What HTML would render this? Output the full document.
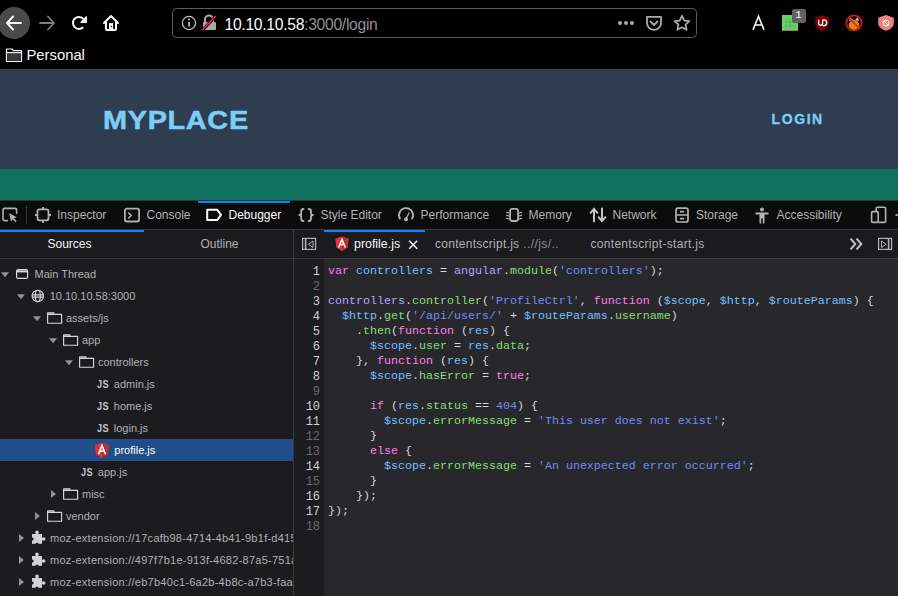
<!DOCTYPE html>
<html><head><meta charset="utf-8">
<style>
*{box-sizing:border-box;margin:0;padding:0}
html,body{width:898px;height:596px;overflow:hidden;background:#000;font-family:"Liberation Sans",sans-serif}
.a{position:absolute}
svg{position:absolute;overflow:visible}
#chrome{left:0;top:0;width:898px;height:69px;background:#000}
#hdr{left:0;top:69px;width:898px;height:100px;background:#2e3e50}
#green{left:0;top:169px;width:898px;height:31px;background:#10705e}
#tb{left:0;top:200px;width:898px;height:29px;background:#0c0c0d;border-top:1px solid #333}
#tabs{left:0;top:229px;width:898px;height:30px;background:#1b1b1e;border-top:1px solid #38383d;border-bottom:1px solid #38383d}
#side{left:0;top:259px;width:293px;height:337px;background:#1c1c1f}
#vdiv{left:293px;top:229px;width:1px;height:367px;background:#38383d}
#gut{left:294px;top:259px;width:30px;height:337px;background:#1c1c1f}
#code{left:324px;top:259px;width:574px;height:337px;background:#28282c}
.tt{font-size:12px;color:#b1b1b3;white-space:nowrap}
.tr{font-size:11px;color:#b1b1b3;white-space:nowrap}
.cl{position:absolute;left:328px;font-family:"Liberation Mono",monospace;font-size:11.67px;white-space:pre;color:#d7d7db;line-height:15px;height:15px}
.ln{position:absolute;left:294px;width:25.6px;text-align:right;font-family:"Liberation Mono",monospace;font-size:12px;line-height:15px;color:#6a6a6e;letter-spacing:-0.3px;margin-top:1px}
.ln.b{color:#cfcfd3}
.k{color:#ff7de9}
.d{color:#75bfff}
.v{color:#b0a4ff}
.p{color:#86de74}
.s{color:#6f8cf5}
</style></head><body>
<div id="chrome" class="a"></div>
<div id="hdr" class="a"></div>
<div id="green" class="a"></div>
<div id="tb" class="a"></div>
<div id="tabs" class="a"></div>
<div id="side" class="a"></div>
<div id="gut" class="a"></div>
<div id="code" class="a"></div>
<div id="vdiv" class="a"></div>


<!-- browser chrome -->
<svg width="898" height="69" style="left:0;top:0">
  <circle cx="14" cy="23" r="16" fill="#4a4a4b"/>
  <g stroke="#fbfbfe" stroke-width="2" fill="none" stroke-linecap="round" stroke-linejoin="round">
    <path d="M7 23 H21 M13 16.5 L7 23 L13 29.5"/>
  </g>
  <g stroke="#7e7e80" stroke-width="1.8" fill="none" stroke-linecap="round" stroke-linejoin="round">
    <path d="M40 23 H54 M48 16.5 L54 23 L48 29.5"/>
  </g>
  <path d="M83.2 27.2 A6 6 0 1 1 83.4 18.9" stroke="#fbfbfe" stroke-width="2" fill="none"/>
  <path d="M81 22.3 H86.3 V16.8 Z" fill="#fbfbfe" stroke="#fbfbfe" stroke-width="1.3" stroke-linejoin="round"/>
  <path d="M104 23 L111 16 L118 23" stroke="#fbfbfe" stroke-width="2" fill="none" stroke-linecap="round" stroke-linejoin="round"/>
  <path d="M106 21.5 V29 Q106 30 107 30 H115 Q116 30 116 29 V21.5" stroke="#fbfbfe" stroke-width="2" fill="none"/>
  <rect x="109" y="23.1" width="4.1" height="7" fill="#fbfbfe"/>
  <circle cx="111.4" cy="26.4" r="0.7" fill="#000"/>
  <rect x="172.5" y="8.5" width="524" height="29" rx="4" fill="#000" stroke="#5d5d5f"/>
  <circle cx="189" cy="23" r="6.6" fill="none" stroke="#c6c6c8" stroke-width="1.2"/>
  <rect x="188.2" y="22" width="1.7" height="4.5" fill="#c6c6c8"/>
  <circle cx="189" cy="19.6" r="1" fill="#c6c6c8"/>
  <path d="M205 22 V19.5 A4 4 0 0 1 213 19.5 V22" fill="none" stroke="#a9a9ab" stroke-width="2"/>
  <rect x="203" y="22" width="13" height="8" rx="1" fill="#a9a9ab"/>
  <path d="M202.5 30 L216 16" stroke="#000" stroke-width="3"/>
  <path d="M202.5 29.5 L215.5 16.5" stroke="#ff1f4b" stroke-width="1.6" stroke-linecap="round"/>
  <circle cx="620" cy="23" r="2" fill="#a9a9ab"/>
  <circle cx="626" cy="23" r="2" fill="#a9a9ab"/>
  <circle cx="632" cy="23" r="2" fill="#a9a9ab"/>
  <path d="M647 16.8 H661 V23 A7 6.8 0 0 1 647 23 Z" fill="none" stroke="#a9a9ab" stroke-width="1.8" stroke-linejoin="round"/>
  <path d="M650.5 21.5 L654 25 L657.5 21.5" fill="none" stroke="#a9a9ab" stroke-width="1.8" stroke-linecap="round" stroke-linejoin="round"/>
  <path d="M682 15.8 L684.3 20.6 L689.4 21.2 L685.6 24.6 L686.6 29.8 L682 27.3 L677.4 29.8 L678.4 24.6 L674.6 21.2 L679.7 20.6 Z" fill="none" stroke="#a9a9ab" stroke-width="1.8" stroke-linejoin="round"/>
  <!-- extensions -->
  <path d="M753 29.8 L758.5 16.4 L764 29.8 M755 25 H762" fill="none" stroke="#fbfbfe" stroke-width="1.6"/>
  <rect x="782" y="15" width="16" height="16" fill="#68d068"/>
  <rect x="782" y="30" width="16" height="1" fill="#c46a5a"/>
  <path d="M786 18 V29 M790 18 V29 M786 22 H796 M786 26 H796" stroke="#51b24e" stroke-width="0.8"/>
  <rect x="792" y="9" width="14" height="14" rx="2" fill="#616163"/>
  <path d="M822 15.2 L828.8 17.5 V23 C828.8 27 826 29.5 822 31 C818 29.5 815.2 27 815.2 23 V17.5 Z" fill="#800000"/>
  <path d="M818.7 19.8 V23.3 A1.95 2 0 0 0 822.6 23.3 V19.8 M822.6 19.8 H823.8 A2.9 2.9 0 0 1 823.8 25.6 H822.6" fill="none" stroke="#fff" stroke-width="1.3"/>
  <circle cx="854" cy="23" r="7.6" fill="#000" stroke="#e0201b" stroke-width="1.5"/>
  <path d="M849 21 L850.5 17.5 L853 20 Z M859 21 L857.5 17.5 L855 20 Z" fill="#e8e8e8"/>
  <path d="M848.5 26 Q849 20.5 854 20 Q859 20.5 859.5 26 Q857 29.8 854 29.8 Q851 29.8 848.5 26 Z" fill="#e8870f"/>
  <path d="M848.6 17.6 L859.4 28.4" stroke="#e0201b" stroke-width="1.6"/>
  <path d="M886 15 L893.8 17.8 V23 C893.8 27 890.6 29.4 886 30.8 C881.4 29.4 878.2 27 878.2 23 V17.8 Z" fill="#f07f84"/>
  <circle cx="886" cy="23" r="3" fill="none" stroke="#fff" stroke-width="1"/>
  <path d="M883.9 20.9 L888.1 25.1" stroke="#fff" stroke-width="1"/>
  <!-- bookmark folder -->
  <path d="M6.5 49 H12 L13.5 50.6 H21.5 V61.5 H6.5 Z" fill="none" stroke="#f4f4f6" stroke-width="1.2" stroke-linejoin="round"/>
  <rect x="7.2" y="53.2" width="13.6" height="7.6" fill="#3a3a3c"/>
  <path d="M6.5 52.6 H21.5" stroke="#f4f4f6" stroke-width="1.2"/>
</svg>
<div class="a" style="left:224.5px;top:14.5px;font-size:15.7px;letter-spacing:-0.3px;line-height:20px;color:#fbfbfe;white-space:nowrap">10.10.10.58<span style="color:#909092">:3000/login</span></div>

<div class="a" style="left:795.5px;top:9.5px;font-family:'Liberation Mono',monospace;font-size:10px;line-height:12px;color:#fff">1</div>
<div class="a" style="left:26.5px;top:46px;font-size:14.8px;line-height:18px;color:#fbfbfe">Personal</div>


<!-- devtools toolbar -->
<div class="a" style="left:198px;top:201px;width:92px;height:2px;background:#0a84ff"></div>
<svg width="898" height="29" style="left:0;top:200px">
  <g fill="none" stroke="#b1b1b3" stroke-width="1.6">
    <!-- picker -->
    <path d="M7.8 20.6 H4.6 Q3 20.6 3 19 V10 Q3 8.4 4.6 8.4 H15 Q16.6 8.4 16.6 10 V13.8"/>
  </g>
  <path d="M9.3 13.3 L16.8 17.2 L13.9 18.2 L16.6 21 L15.4 22.2 L12.6 19.3 L11 21.8 Z" fill="#b1b1b3"/>
  <rect x="26" y="5.5" width="1" height="19" fill="#38383d"/>
  <!-- inspector -->
  <g fill="none" stroke="#b1b1b3" stroke-width="1.8">
    <rect x="37.5" y="9.3" width="11" height="11" rx="2"/>
    <path d="M43 7 V9.5 M43 20.5 V23 M35 15 H37.5 M48.5 15 H51"/>
  </g>
  <!-- console -->
  <g fill="none" stroke="#b1b1b3" stroke-width="1.8">
    <rect x="124.9" y="8.7" width="14.2" height="12.8" rx="2"/>
    <path d="M128.3 12.6 L131.2 15.5 L128.3 18.5" stroke-width="1.5"/>
  </g>
  <!-- debugger -->
  <path d="M207.2 9.8 H217.3 L221 14.9 L217.3 20 H207.2 Z" fill="none" stroke="#fbfbfe" stroke-width="2" stroke-linejoin="round"/>
  <!-- style editor -->
  <g fill="none" stroke="#b1b1b3" stroke-width="1.8" stroke-linecap="round" stroke-linejoin="round">
    <path d="M303.6 9 Q301.2 9 301.2 11.3 V13.3 Q301.2 15 299.3 15 Q301.2 15 301.2 16.7 V18.7 Q301.2 21 303.6 21"/>
    <path d="M308.6 9 Q311 9 311 11.3 V13.3 Q311 15 312.9 15 Q311 15 311 16.7 V18.7 Q311 21 308.6 21"/>
  </g>
  <!-- performance -->
  <path d="M399.9 18.6 A7 7 0 1 1 412.1 18.6" fill="none" stroke="#b1b1b3" stroke-width="1.8" stroke-linecap="round"/>
  <path d="M406 19 L409 13" stroke="#b1b1b3" stroke-width="1.3" stroke-linecap="round"/>
  <circle cx="406" cy="19.3" r="2" fill="#b1b1b3"/>
  <!-- memory -->
  <g fill="none" stroke="#b1b1b3" stroke-width="1.8">
    <rect x="510.1" y="8.9" width="8" height="12.1" rx="2.2"/>
  </g>
  <g fill="none" stroke="#b1b1b3" stroke-width="1.3" stroke-linecap="round">
    <path d="M506.6 12.4 Q507.6 12.6 509 13 M506.6 15.4 Q507.6 15.6 509 16 M506.6 18.4 Q507.6 18.6 509 19"/>
    <path d="M521.6 12.4 Q520.6 12.6 519.2 13 M521.6 15.4 Q520.6 15.6 519.2 16 M521.6 18.4 Q520.6 18.6 519.2 19"/>
  </g>
  <!-- network -->
  <g fill="none" stroke="#c4c4c6" stroke-width="2" stroke-linecap="round" stroke-linejoin="round">
    <path d="M594 21.5 V8.8 M590.6 12.8 L594 8.8 L597.4 12.8"/>
    <path d="M602 8.5 V21.2 M598.6 17.2 L602 21.2 L605.4 17.2"/>
  </g>
  <!-- storage -->
  <g fill="none" stroke="#b1b1b3" stroke-width="1.7">
    <rect x="676" y="8.2" width="12" height="13.8" rx="2"/>
    <path d="M676 15 H688 M680 11.6 H684 M680 18.6 H684"/>
  </g>
  <!-- accessibility -->
  <circle cx="762" cy="9.5" r="2" fill="#b1b1b3"/>
  <path d="M755.5 12.5 H768.5 V14.5 H764.5 V23.5 H762.8 V18.5 H761.2 V23.5 H759.5 V14.5 H755.5 Z" fill="#b1b1b3"/>
  <!-- responsive -->
  <g fill="none" stroke="#b1b1b3" stroke-width="1.6">
    <path d="M876.2 11.5 V8.6 Q876.2 7.2 877.6 7.2 H884.2 Q885.6 7.2 885.6 8.6 V21 Q885.6 22.4 884.2 22.4 H878.4"/>
    <rect x="871.6" y="11.6" width="6.6" height="10.8" rx="1.2"/>
  </g>
  <rect x="895.5" y="14.2" width="3" height="1.6" fill="#b1b1b3"/>
</svg>
<div class="a tt" style="left:57px;top:208px;line-height:14px">Inspector</div>
<div class="a tt" style="left:146.5px;top:208px;line-height:14px">Console</div>
<div class="a tt" style="left:228.5px;top:208px;line-height:14px;color:#fbfbfe">Debugger</div>
<div class="a tt" style="left:320.5px;top:208px;line-height:14px">Style Editor</div>
<div class="a tt" style="left:420.5px;top:208px;line-height:14px">Performance</div>
<div class="a tt" style="left:528.5px;top:208px;line-height:14px">Memory</div>
<div class="a tt" style="left:612.5px;top:208px;line-height:14px">Network</div>
<div class="a tt" style="left:696px;top:208px;line-height:14px">Storage</div>
<div class="a tt" style="left:776.5px;top:208px;line-height:14px">Accessibility</div>


<!-- source tabs -->
<div class="a" style="left:0;top:230px;width:144px;height:2px;background:#0a84ff"></div>
<div class="a" style="left:324px;top:230px;width:101px;height:2px;background:#0a84ff"></div>
<div class="a tt" style="left:47.5px;top:236.5px;line-height:14px;color:#f4f4f5;font-size:12px">Sources</div>
<div class="a tt" style="left:200.5px;top:236.5px;line-height:14px;font-size:12px">Outline</div>
<div class="a tt" style="left:354px;top:237px;line-height:14px;color:#f4f4f5;font-size:12.4px">profile.js</div>
<div class="a tt" style="left:435px;top:237px;line-height:14px;font-size:12px;letter-spacing:0.27px">contentscript.js<span style="color:#8f8f93;margin-left:4px;letter-spacing:0.4px">..//js/..</span></div>
<div class="a tt" style="left:590.5px;top:237px;line-height:14px;font-size:12px;letter-spacing:0.3px">contentscript-start.js</div>
<svg width="898" height="30" style="left:0;top:229px">
  <!-- sidebar toggle -->
  <rect x="302.6" y="9.4" width="13" height="11" fill="none" stroke="#b1b1b3" stroke-width="1.2"/>
  <path d="M305.6 9.4 V20.4" stroke="#b1b1b3" stroke-width="1.6"/>
  <path d="M313 12 L308.5 15.2 L313 18.5 Z" fill="none" stroke="#b1b1b3" stroke-width="1"/>
  <!-- angular icon -->
  <path d="M342 7.5 L348.6 9.8 L347.6 18.8 L342 22 L336.4 18.8 L335.4 9.8 Z" fill="#e23237"/>
  <path d="M342 7.5 L348.6 9.8 L347.6 18.8 L342 22 Z" fill="#b52e31"/>
  <path d="M338.6 18.5 L342 10.5 L345.4 18.5 M339.9 15.6 H344.1" fill="none" stroke="#fff" stroke-width="1.5"/>
  <!-- close x -->
  <path d="M409.2 11.8 L417.2 19.8 M417.2 11.8 L409.2 19.8" stroke="#f4f4f5" stroke-width="1.5"/>
  <!-- >> -->
  <path d="M850.6 9.6 L855.3 15 L850.6 20.4 M856.6 9.6 L861.3 15 L856.6 20.4" fill="none" stroke="#c4c4c6" stroke-width="2"/>
  <!-- toggle right -->
  <rect x="878.6" y="9.4" width="13" height="11" fill="none" stroke="#b1b1b3" stroke-width="1.2"/>
  <path d="M888.6 9.4 V20.4" stroke="#b1b1b3" stroke-width="1.6"/>
  <path d="M881.5 12 L886 15.2 L881.5 18.5 Z" fill="none" stroke="#b1b1b3" stroke-width="1"/>
</svg>


<!-- tree -->
<div class="a" style="left:0;top:259px;width:293px;height:337px;overflow:hidden">
<div class="a" style="left:0;top:-259px;width:898px;height:596px">
<div class="a tr" style="left:34.5px;top:266.5px;line-height:14px;color:#b1b1b3">Main Thread</div>
<div class="a tr" style="left:49.7px;top:288.5px;line-height:14px;color:#b1b1b3">10.10.10.58:3000</div>
<div class="a tr" style="left:66px;top:310.5px;line-height:14px;color:#b1b1b3">assets/js</div>
<div class="a tr" style="left:82px;top:332.5px;line-height:14px;color:#b1b1b3">app</div>
<div class="a tr" style="left:98px;top:354.5px;line-height:14px;color:#b1b1b3">controllers</div>
<div class="a" style="left:97.3px;top:376.5px;font-size:11.4px;font-weight:bold;line-height:14px;color:#c4c4c7;letter-spacing:0.4px;transform:scaleX(0.8);transform-origin:0 0">JS</div>
<div class="a tr" style="left:113.8px;top:376.5px;line-height:14px;color:#b1b1b3">admin.js</div>
<div class="a" style="left:97.3px;top:398.5px;font-size:11.4px;font-weight:bold;line-height:14px;color:#c4c4c7;letter-spacing:0.4px;transform:scaleX(0.8);transform-origin:0 0">JS</div>
<div class="a tr" style="left:113.8px;top:398.5px;line-height:14px;color:#b1b1b3">home.js</div>
<div class="a" style="left:97.3px;top:420.5px;font-size:11.4px;font-weight:bold;line-height:14px;color:#c4c4c7;letter-spacing:0.4px;transform:scaleX(0.8);transform-origin:0 0">JS</div>
<div class="a tr" style="left:113.8px;top:420.5px;line-height:14px;color:#b1b1b3">login.js</div>
<div class="a" style="left:0;top:439px;width:293px;height:22px;background:#204e8a"></div>
<div class="a tr" style="left:114.3px;top:442.5px;line-height:14px;color:#ffffff">profile.js</div>
<div class="a" style="left:81.3px;top:464.5px;font-size:11.4px;font-weight:bold;line-height:14px;color:#c4c4c7;letter-spacing:0.4px;transform:scaleX(0.8);transform-origin:0 0">JS</div>
<div class="a tr" style="left:97.8px;top:464.5px;line-height:14px;color:#b1b1b3">app.js</div>
<div class="a tr" style="left:82px;top:486.5px;line-height:14px;color:#b1b1b3">misc</div>
<div class="a tr" style="left:66px;top:508.5px;line-height:14px;color:#b1b1b3">vendor</div>
<div class="a tr" style="left:50px;top:530.5px;line-height:14px;color:#b1b1b3;letter-spacing:0.26px">moz-extension://17cafb98-4714-4b41-9b1f-d415a1b2c3d4</div>
<div class="a tr" style="left:50px;top:552.5px;line-height:14px;color:#b1b1b3;letter-spacing:0.26px">moz-extension://497f7b1e-913f-4682-87a5-751a2b3c4d5e</div>
<div class="a tr" style="left:50px;top:574.5px;line-height:14px;color:#b1b1b3;letter-spacing:0.26px">moz-extension://eb7b40c1-6a2b-4b8c-a7b3-faa1b2c3d4e5</div>
<svg width="898" height="596" style="left:0;top:0">
<path d="M1.0 272.2 H9.0 L5.0 277.2 Z" fill="#939395"/>
<rect x="16.6" y="269.6" width="11" height="8.8" rx="1.5" fill="none" stroke="#d7d7db" stroke-width="1.2"/><rect x="17" y="270.4" width="10.2" height="2" fill="#d7d7db"/>
<path d="M17.0 294.2 H25.0 L21.0 299.2 Z" fill="#939395"/>
<g fill="none" stroke="#d7d7db" stroke-width="1.1"><circle cx="37.8" cy="296" r="5.7"/><ellipse cx="37.8" cy="296" rx="2.5" ry="5.7"/><path d="M32.1 294.9 H43.5 M32.1 297.1 H43.5"/></g>
<path d="M33.0 316.2 H41.0 L37.0 321.2 Z" fill="#939395"/>
<path d="M47.6 323.2 V312.8 H53.800000000000004 V314.4 H61.6 V323.2 Z M47.6 314.4 H53.800000000000004" fill="none" stroke="#d7d7db" stroke-width="1.15" stroke-linejoin="round"/>
<path d="M49.0 338.2 H57.0 L53.0 343.2 Z" fill="#939395"/>
<path d="M63.599999999999994 345.2 V334.8 H69.8 V336.4 H77.6 V345.2 Z M63.599999999999994 336.4 H69.8" fill="none" stroke="#d7d7db" stroke-width="1.15" stroke-linejoin="round"/>
<path d="M65.0 360.2 H73.0 L69.0 365.2 Z" fill="#939395"/>
<path d="M79.6 367.2 V356.8 H85.8 V358.4 H93.6 V367.2 Z M79.6 358.4 H85.8" fill="none" stroke="#d7d7db" stroke-width="1.15" stroke-linejoin="round"/>
<path d="M102 442.5 L109 445 L108 454.5 L102 458 L96 454.5 L95 445 Z" fill="#e23237"/><path d="M102 442.5 L109 445 L108 454.5 L102 458 Z" fill="#b52e31"/><path d="M98.5 454.2 L102 445.5 L105.5 454.2 M99.9 451 H104.1" fill="none" stroke="#fff" stroke-width="1.6"/>
<path d="M51 490 V498 L56 494 Z" fill="#939395"/>
<path d="M63.599999999999994 499.2 V488.8 H69.8 V490.4 H77.6 V499.2 Z M63.599999999999994 490.4 H69.8" fill="none" stroke="#d7d7db" stroke-width="1.15" stroke-linejoin="round"/>
<path d="M35 512 V520 L40 516 Z" fill="#939395"/>
<path d="M47.6 521.2 V510.8 H53.800000000000004 V512.4 H61.6 V521.2 Z M47.6 512.4 H53.800000000000004" fill="none" stroke="#d7d7db" stroke-width="1.15" stroke-linejoin="round"/>
<path d="M19 534 V542 L24 538 Z" fill="#939395"/>
<rect x="32" y="534" width="10" height="9.8" fill="#d2d2d4"/><circle cx="37" cy="532.4" r="1.8" fill="#d2d2d4"/><circle cx="43.7" cy="539" r="1.8" fill="#d2d2d4"/><rect x="41" y="538" width="2" height="2" fill="#d2d2d4"/><circle cx="32.2" cy="539" r="1.5" fill="#1c1c1f"/><circle cx="37" cy="544" r="1.5" fill="#1c1c1f"/>
<path d="M19 556 V564 L24 560 Z" fill="#939395"/>
<rect x="32" y="556" width="10" height="9.8" fill="#d2d2d4"/><circle cx="37" cy="554.4" r="1.8" fill="#d2d2d4"/><circle cx="43.7" cy="561" r="1.8" fill="#d2d2d4"/><rect x="41" y="560" width="2" height="2" fill="#d2d2d4"/><circle cx="32.2" cy="561" r="1.5" fill="#1c1c1f"/><circle cx="37" cy="566" r="1.5" fill="#1c1c1f"/>
<path d="M19 578 V586 L24 582 Z" fill="#939395"/>
<rect x="32" y="578" width="10" height="9.8" fill="#d2d2d4"/><circle cx="37" cy="576.4" r="1.8" fill="#d2d2d4"/><circle cx="43.7" cy="583" r="1.8" fill="#d2d2d4"/><rect x="41" y="582" width="2" height="2" fill="#d2d2d4"/><circle cx="32.2" cy="583" r="1.5" fill="#1c1c1f"/><circle cx="37" cy="588" r="1.5" fill="#1c1c1f"/>
</svg>
</div></div>

<!-- page header text -->
<div class="a" style="left:103px;top:105px;font-size:26.5px;font-weight:bold;color:#7ccdf7;letter-spacing:0.6px;line-height:30px;-webkit-text-stroke:0.5px #7ccdf7;transform:scaleX(1.09);transform-origin:0 0">MYPLACE</div>
<div class="a" style="left:771.5px;top:110px;font-size:14px;font-weight:bold;color:#7ccdf7;letter-spacing:1.6px;line-height:18px;-webkit-text-stroke:0.3px #7ccdf7">LOGIN</div>

<!-- code -->
<div class="ln b" style="top:264px">1</div>
<div class="ln" style="top:279px">2</div>
<div class="ln b" style="top:294px">3</div>
<div class="ln b" style="top:309px">4</div>
<div class="ln b" style="top:324px">5</div>
<div class="ln b" style="top:339px">6</div>
<div class="ln b" style="top:354px">7</div>
<div class="ln b" style="top:369px">8</div>
<div class="ln" style="top:384px">9</div>
<div class="ln b" style="top:399px">10</div>
<div class="ln b" style="top:414px">11</div>
<div class="ln" style="top:429px">12</div>
<div class="ln" style="top:444px">13</div>
<div class="ln b" style="top:459px">14</div>
<div class="ln" style="top:474px">15</div>
<div class="ln b" style="top:489px">16</div>
<div class="ln b" style="top:504px">17</div>
<div class="ln" style="top:519px">18</div>

<div class="cl" style="top:264px"><span class="k">var</span> <span class="d">controllers</span> = <span class="v">angular</span>.<span class="p">module</span>(<span class="s">'controllers'</span>);</div>
<div class="cl" style="top:294px"><span class="v">controllers</span>.<span class="p">controller</span>(<span class="s">'ProfileCtrl'</span>, <span class="k">function</span> (<span class="d">$scope</span>, <span class="d">$http</span>, <span class="d">$routeParams</span>) {</div>
<div class="cl" style="top:309px">  <span class="d">$http</span>.<span class="p">get</span>(<span class="s">'/api/users/'</span> + <span class="d">$routeParams</span>.<span class="p">username</span>)</div>
<div class="cl" style="top:324px">    .<span class="p">then</span>(<span class="k">function</span> (<span class="d">res</span>) {</div>
<div class="cl" style="top:339px">      <span class="d">$scope</span>.<span class="p">user</span> = <span class="d">res</span>.<span class="p">data</span>;</div>
<div class="cl" style="top:354px">    }, <span class="k">function</span> (<span class="d">res</span>) {</div>
<div class="cl" style="top:369px">      <span class="d">$scope</span>.<span class="p">hasError</span> = <span class="k">true</span>;</div>
<div class="cl" style="top:399px">      <span class="k">if</span> (<span class="d">res</span>.<span class="p">status</span> == <span class="s">404</span>) {</div>
<div class="cl" style="top:414px">        <span class="d">$scope</span>.<span class="p">errorMessage</span> = <span class="s">'This user does not exist'</span>;</div>
<div class="cl" style="top:429px">      }</div>
<div class="cl" style="top:444px">      <span class="k">else</span> {</div>
<div class="cl" style="top:459px">        <span class="d">$scope</span>.<span class="p">errorMessage</span> = <span class="s">'An unexpected error occurred'</span>;</div>
<div class="cl" style="top:474px">      }</div>
<div class="cl" style="top:489px">    });</div>
<div class="cl" style="top:504px">});</div>

</body></html>
